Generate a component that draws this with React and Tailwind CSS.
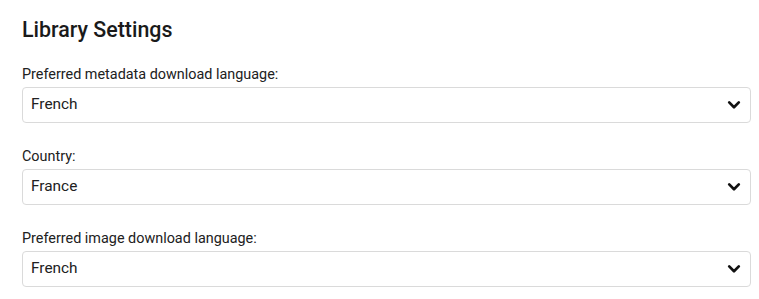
export default function App() {
  const fields = [
    { label: "Preferred metadata download language:", value: "French" },
    { label: "Country:", value: "France" },
    { label: "Preferred image download language:", value: "French" },
  ];
  return (
    <div className="min-h-[299px] bg-white pl-[22px] pr-[8px] pt-[15px] text-[#212121]" style={{ fontFamily: "Roboto, 'Noto Sans', sans-serif" }}>
      <h1 className="text-[21.4px] leading-[29px] font-medium text-[#1a1a1a]">Library Settings</h1>
      <div className="mt-[21px] flex flex-col gap-6">
        {fields.map((f, i) => (
          <div key={i} className="flex flex-col gap-[2px]">
            <label className="text-[14.4px] leading-5 text-[#212121]">{f.label}</label>
            <div className="flex h-9 items-center justify-between rounded-[4px] border border-[#dadada] pl-[8px] pr-[9px]">
              <span className="text-[15.4px] text-[#212121]">{f.value}</span>
              <svg width="14" height="10" viewBox="0 0 14 10" className="text-[#111]">
                <path d="M2.2 2.4 L7 7.2 L11.8 2.4" fill="none" stroke="currentColor" strokeWidth="2.7" strokeLinecap="round" strokeLinejoin="round" />
              </svg>
            </div>
          </div>
        ))}
      </div>
    </div>
  );
}
